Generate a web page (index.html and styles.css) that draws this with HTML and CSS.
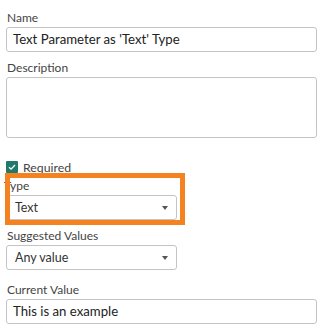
FILE: index.html
```html
<!DOCTYPE html>
<html lang="en">
  <head>
    <meta charset="UTF-8" />
    <title>Parameter</title>
    <link rel="stylesheet" href="styles.css">
  </head>
  <body>
    <div class="form"><!-- parameter form -->
      <div class="field">
        <label class="lbl">Name</label>
        <div class="box">Text Parameter as 'Text' Type</div>
      </div>
      <div class="field">
        <label class="lbl">Description</label>
        <div class="box area"></div>
      </div>
      <div class="check"><!-- required checkbox -->
        <span class="tick">
          <svg width="12" height="12" viewBox="0 0 12 12"><path d="M3 6.2 L5.1 8.2 L9 4" fill="none" stroke="#fff" stroke-width="1.3"/></svg>
        </span>
        <span>Required</span>
      </div>
      <div class="field type">
        <label class="lbl">Type</label>
        <div class="box drop"><span>Text</span><i class="caret"></i></div>
      </div>
      <div class="field">
        <label class="lbl">Suggested Values</label>
        <div class="box drop"><span>Any value</span><i class="caret"></i></div>
      </div>
      <div class="field cur">
        <label class="lbl">Current Value</label>
        <div class="box">This is an example</div>
      </div>
    </div>
    <div class="mark"></div><!-- orange highlight -->
  </body>
</html>
```
FILE: styles.css
```css
/* base */
* {
  margin: 0;
  padding: 0;
  box-sizing: border-box;
}
body {
  background: #fff;
  font-family: Lato, "Liberation Sans", sans-serif;
  font-size: 12px;
  color: #444;
  position: relative;
  width: 330px;
  height: 334px;
  overflow: hidden;
}
.form {
  padding: 10px 13px 0 6px;
}
.field {
  display: flex;
  flex-direction: column;
  margin-bottom: 8px;
}
.lbl {
  display: block;
  height: 17px;
  line-height: 16px;
  padding-left: 1px;
  color: #444;
}
.box {
  height: 25px;
  border: 1px solid #c4c4c4;
  border-radius: 3px;
  padding-left: 6px;
  font-size: 13.2px;
  line-height: 23px;
  color: #222;
  background: #fff;
}
.area {
  height: 61px;
}
.check {
  display: flex;
  align-items: center;
  gap: 5px;
  margin-top: 23px;
  height: 12px;
  font-size: 12.3px;
  color: #444;
}
.tick {
  width: 12px;
  height: 12px;
  background: #21796b;
  border-radius: 1px;
  display: flex;
}
.type {
  margin-top: 5px;
}
.type .lbl {
  padding-left: 0;
  margin-left: -2px;
}
.drop {
  width: 171px;
  height: 25px;
  padding: 0 8px 0 8px;
  display: flex;
  align-items: center;
  justify-content: space-between;
  font-size: 12.5px;
  color: #333;
}
.caret {
  width: 0;
  height: 0;
  border-left: 3.5px solid transparent;
  border-right: 3.5px solid transparent;
  border-top: 4px solid #555;
}
.cur {
  margin-top: 12px;
}
.mark {
  position: absolute;
  left: 5px;
  top: 173px;
  width: 180px;
  height: 52px;
  border: 5px solid #f58220;
}
```
